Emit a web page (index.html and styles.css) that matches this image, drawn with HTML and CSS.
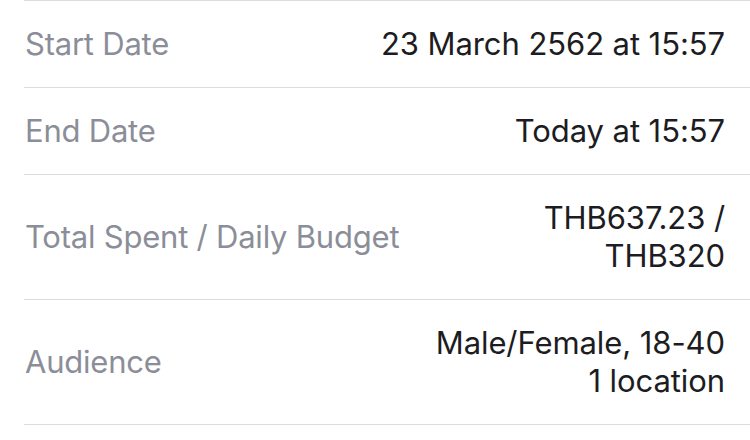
FILE: index.html
```html
<!DOCTYPE html>
<html>
<head>
<meta charset="utf-8">
<link rel="stylesheet" href="styles.css">
</head>
<body>
<div class="list">
  <div class="row">
    <div class="label">Start Date</div>
    <div class="value">23 March 2562 at 15:57</div>
  </div>
  <div class="row">
    <div class="label">End Date</div>
    <div class="value">Today at 15:57</div>
  </div>
  <div class="row">
    <div class="label">Total Spent / Daily Budget</div>
    <div class="value">THB637.23 /<br>THB320</div>
  </div>
  <div class="row">
    <div class="label">Audience</div>
    <div class="value">Male/Female, 18-40<br>1 location</div>
  </div>
</div>
</body>
</html>
```

FILE: styles.css
```css
html, body {
  margin: 0;
  padding: 0;
  background: #ffffff;
}
body {
  font-family: Inter, "Noto Sans", sans-serif;
  font-size: 31px;
  -webkit-font-smoothing: antialiased;
}
.list {
  margin-left: 24px;
  border-top: 1px solid #dcdce0;
}
.row {
  display: flex;
  justify-content: space-between;
  align-items: center;
  padding: 24px 25px 24px 1px;
  line-height: 38px;
  border-bottom: 1px solid #dcdce0;
}
.label {
  color: #8b8e98;
  letter-spacing: -0.22px;
}
.value {
  color: #1c1c22;
  text-align: right;
  letter-spacing: -0.08px;
}
```
